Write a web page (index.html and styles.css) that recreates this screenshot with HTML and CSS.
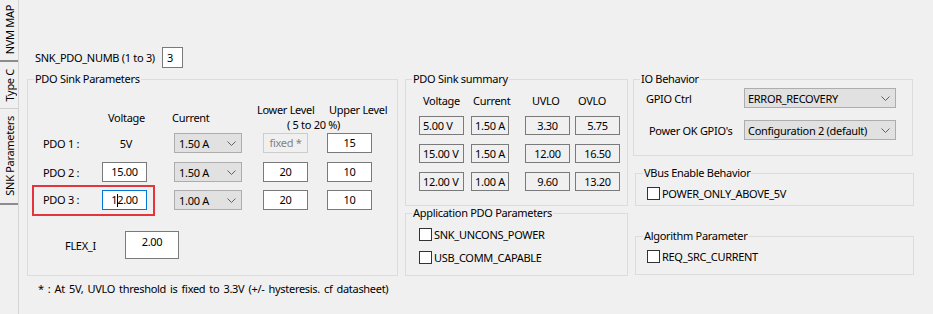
FILE: index.html
```html
<!DOCTYPE html>
<html lang="en">
<head>
    <meta charset="UTF-8">
    <meta name="viewport" content="width=device-width, initial-scale=1.0">
    <title>SNK Parameters</title>
    <link rel="stylesheet" href="styles.css">
</head>
<body>
    <div class="window">
        <!-- vertical tab strip -->
        <nav class="tabs">
            <div class="tab tab-nvm"><span>NVM MAP</span></div>
            <div class="tab tab-typec"><span>Type C</span></div>
            <div class="tab tab-snk active"><span>SNK Parameters</span></div>
        </nav>

        <main class="page">
            <div class="numb-row">
                <span class="numb-label">SNK_PDO_NUMB (1 to 3)</span>
                <span class="field field-numb">3</span>
            </div>

            <div class="columns">
                <!-- PDO Sink Parameters -->
                <fieldset class="group group-sink">
                    <legend>PDO Sink Parameters</legend>
                    <div class="group-body">
                        <div class="sink-head">
                            <span class="h-volt">Voltage</span>
                            <span class="h-cur">Current</span>
                            <div class="h-levels">
                                <div class="h-levels-top">
                                    <span class="h-low">Lower Level</span>
                                    <span>Upper Level</span>
                                </div>
                                <div class="h-range">( 5 to 20 %)</div>
                            </div>
                        </div>

                        <div class="sink-row row-1">
                            <div class="lead">
                                <span class="lead-label">PDO 1 :</span>
                                <span class="volt-text">5V</span>
                            </div>
                            <div class="combo combo-cur">
                                <span>1.50 A</span>
                                <svg class="chev" width="9" height="5" viewBox="0 0 9 5"><polyline points="0.5,0.5 4.5,4.5 8.5,0.5" fill="none" stroke="#606060" stroke-width="1"/></svg>
                            </div>
                            <span class="field field-level level-low disabled">fixed *</span>
                            <span class="field field-level level-up">15</span>
                        </div>

                        <div class="sink-row row-2">
                            <div class="lead">
                                <span class="lead-label">PDO 2 :</span>
                                <span class="field field-volt">15.00</span>
                            </div>
                            <div class="combo combo-cur">
                                <span>1.50 A</span>
                                <svg class="chev" width="9" height="5" viewBox="0 0 9 5"><polyline points="0.5,0.5 4.5,4.5 8.5,0.5" fill="none" stroke="#606060" stroke-width="1"/></svg>
                            </div>
                            <span class="field field-level level-low">20</span>
                            <span class="field field-level level-up">10</span>
                        </div>

                        <div class="sink-row row-3">
                            <div class="lead marked">
                                <span class="lead-label">PDO 3 :</span>
                                <span class="field field-volt focused">1<span class="caret"></span>2.00</span>
                            </div>
                            <div class="combo combo-cur">
                                <span>1.00 A</span>
                                <svg class="chev" width="9" height="5" viewBox="0 0 9 5"><polyline points="0.5,0.5 4.5,4.5 8.5,0.5" fill="none" stroke="#606060" stroke-width="1"/></svg>
                            </div>
                            <span class="field field-level level-low">20</span>
                            <span class="field field-level level-up">10</span>
                        </div>

                        <div class="flex-row">
                            <span class="flex-label">FLEX_I</span>
                            <span class="field field-flex">2.00</span>
                        </div>
                    </div>
                </fieldset>

                <div class="col col-mid">
                    <fieldset class="group group-summary">
                        <legend>PDO Sink summary</legend>
                        <div class="group-body">
                            <div class="sum-row sum-head">
                                <span class="c-volt">Voltage</span>
                                <span class="c-cur">Current</span>
                                <span class="c-uvlo">UVLO</span>
                                <span class="c-ovlo">OVLO</span>
                            </div>
                            <div class="sum-row">
                                <span class="cell c-volt">5.00 V</span>
                                <span class="cell c-cur">1.50 A</span>
                                <span class="cell c-uvlo">3.30</span>
                                <span class="cell c-ovlo">5.75</span>
                            </div>
                            <div class="sum-row">
                                <span class="cell c-volt">15.00 V</span>
                                <span class="cell c-cur">1.50 A</span>
                                <span class="cell c-uvlo">12.00</span>
                                <span class="cell c-ovlo">16.50</span>
                            </div>
                            <div class="sum-row">
                                <span class="cell c-volt">12.00 V</span>
                                <span class="cell c-cur">1.00 A</span>
                                <span class="cell c-uvlo">9.60</span>
                                <span class="cell c-ovlo">13.20</span>
                            </div>
                        </div>
                    </fieldset>

                    <fieldset class="group group-app">
                        <legend>Application PDO Parameters</legend>
                        <div class="group-body">
                            <label class="check check-first"><span class="box"></span>SNK_UNCONS_POWER</label>
                            <label class="check check-second"><span class="box"></span>USB_COMM_CAPABLE</label>
                        </div>
                    </fieldset>
                </div>

                <div class="col col-right">
                    <fieldset class="group group-io">
                        <legend>IO Behavior</legend>
                        <div class="io-row io-row-1">
                            <span class="io-label">GPIO Ctrl</span>
                            <div class="combo combo-io">
                                <span>ERROR_RECOVERY</span>
                                <svg class="chev" width="9" height="5" viewBox="0 0 9 5"><polyline points="0.5,0.5 4.5,4.5 8.5,0.5" fill="none" stroke="#606060" stroke-width="1"/></svg>
                            </div>
                        </div>
                        <div class="io-row io-row-2">
                            <span class="io-label io-label-pok">Power OK GPIO's</span>
                            <div class="combo combo-io">
                                <span>Configuration 2 (default)</span>
                                <svg class="chev" width="9" height="5" viewBox="0 0 9 5"><polyline points="0.5,0.5 4.5,4.5 8.5,0.5" fill="none" stroke="#606060" stroke-width="1"/></svg>
                            </div>
                        </div>
                    </fieldset>

                    <fieldset class="group group-vbus">
                        <legend>VBus Enable Behavior</legend>
                        <div class="group-body">
                            <label class="check"><span class="box"></span>POWER_ONLY_ABOVE_5V</label>
                        </div>
                    </fieldset>

                    <fieldset class="group group-algo">
                        <legend>Algorithm Parameter</legend>
                        <div class="group-body">
                            <label class="check"><span class="box"></span>REQ_SRC_CURRENT</label>
                        </div>
                    </fieldset>
                </div>
            </div>

            <p class="footnote">* : At 5V, UVLO threshold is fixed to 3.3V (+/- hysteresis. cf datasheet)</p>
        </main>
    </div>
</body>
</html>
```

FILE: styles.css
```css
* {
    box-sizing: border-box;
}

body {
    margin: 0;
    background-color: #f0f0f0;
    font-family: "Noto Sans", "Open Sans", sans-serif;
    font-size: 11px;
    letter-spacing: -0.3px;
    line-height: 15px;
    color: #000;
}

.window {
    display: flex;
    width: 933px;
    height: 314px;
}

/* tab strip */
.tabs {
    width: 19px;
    border-right: 1px solid #d4d4d4;
    display: flex;
    flex-direction: column;
}

.tab {
    display: flex;
    align-items: center;
    justify-content: center;
    width: 18px;
}

.tab span {
    writing-mode: vertical-rl;
    transform: rotate(180deg);
    white-space: nowrap;
}

.tab-nvm {
    height: 62px;
    border-bottom: 2px solid #8c8c8c;
}

.tab-typec {
    height: 47px;
    border-bottom: 1px solid #cfcfcf;
}

.tab-snk {
    height: 96px;
    border-bottom: 2px solid #8c8c8c;
}

/* page */
.page {
    flex: 1;
    padding-left: 8px;
}

.numb-row {
    display: flex;
    align-items: center;
    margin-top: 47px;
    margin-left: 8px;
    height: 21px;
}

.numb-label {
    width: 127px;
}

.field {
    display: block;
    background-color: #fff;
    border: 1px solid #7a7a7a;
    text-align: center;
    line-height: 18px;
    height: 20px;
    white-space: nowrap;
}

.field-numb {
    width: 21px;
    height: 21px;
    line-height: 19px;
    text-align: left;
    padding-left: 4px;
}

.columns {
    display: flex;
    align-items: flex-start;
    margin-top: 4px;
}

/* group boxes */
.group {
    margin: 0;
    padding: 0;
    border: 1px solid #dcdcdc;
    min-width: 0;
}

.group legend {
    padding: 0 1px;
    margin-left: 6px;
    line-height: 14px;
}

.group-sink {
    width: 371px;
    padding-bottom: 16px;
}

.group-sink .group-body {
    padding-left: 4px;
}

.sink-head {
    display: flex;
    align-items: flex-end;
    height: 30px;
    margin-top: 16px;
}

.h-volt {
    width: 140px;
    padding-left: 76px;
    margin-bottom: 7px;
}

.h-cur {
    width: 85px;
    margin-bottom: 7px;
}

.h-levels-top {
    display: flex;
}

.h-low {
    width: 72px;
}

.h-range {
    padding-left: 30px;
}

.sink-row {
    display: flex;
    align-items: center;
    height: 20px;
}

.row-1 {
    margin-top: 1px;
}

.row-2 {
    margin-top: 9px;
}

.row-3 {
    margin-top: 8px;
}

.lead {
    width: 123px;
    display: flex;
    align-items: center;
    padding-left: 11px;
}

.lead.marked {
    border: 2px solid #e5353c;
    padding: 3px 0 4px 9px;
}

.lead-label {
    width: 59px;
}

.volt-text {
    width: 45px;
    text-align: center;
    padding-left: 3px;
}

.field-volt {
    width: 45px;
}

.field.focused {
    border-color: #0078d7;
}

.caret {
    display: inline-block;
    width: 1px;
    height: 13px;
    background-color: #000;
    vertical-align: -3px;
    margin-right: -1px;
}

.combo {
    display: flex;
    align-items: center;
    justify-content: space-between;
    height: 20px;
    background-color: #e1e1e1;
    border: 1px solid #adadad;
    padding: 0 5px 0 4px;
    white-space: nowrap;
}

.combo-cur {
    width: 68px;
    margin-left: 19px;
}

.chev {
    display: block;
}

.field-level {
    width: 45px;
}

.level-low {
    margin-left: 21px;
}

.level-up {
    margin-left: 19px;
}

.field.disabled {
    background-color: #f0f0f0;
    border-color: #cccccc;
    color: #838383;
}

.flex-row {
    display: flex;
    align-items: center;
    height: 28px;
    margin-top: 21px;
}

.flex-label {
    width: 93px;
    padding-left: 33px;
}

.field-flex {
    width: 54px;
    height: 28px;
    line-height: 15px;
    padding-top: 2px;
}

/* middle column */
.col-mid {
    margin-left: 7px;
}

.group-summary {
    width: 223px;
    padding-bottom: 14px;
}

.group-summary .group-body,
.group-app .group-body {
    padding-left: 13px;
}

.sum-row {
    display: flex;
    height: 19px;
    margin-top: 9px;
}

.sum-row.sum-head {
    height: 15px;
    margin-top: 7px;
    margin-bottom: -1px;
}

.sum-head span {
    white-space: nowrap;
}

.c-volt {
    width: 45px;
}

.c-cur {
    width: 38px;
    margin-left: 7px;
}

.c-uvlo {
    width: 45px;
    margin-left: 16px;
}

.c-ovlo {
    width: 45px;
    margin-left: 5px;
}

.sum-head .c-volt {
    padding-left: 4px;
}

.sum-head .c-cur {
    padding-left: 2px;
}

.sum-head .c-uvlo {
    padding-left: 7px;
}

.sum-head .c-ovlo {
    padding-left: 3px;
}

.cell {
    border: 1px solid #7a7a7a;
    line-height: 17px;
    text-align: center;
    white-space: nowrap;
}

.cell.c-volt {
    text-align: left;
    padding-left: 3px;
}

.group-app {
    width: 223px;
    padding-bottom: 10px;
}

.check {
    display: flex;
    align-items: center;
    height: 15px;
    margin-top: 6px;
}

.check-first {
    margin-top: 7px;
}

.check-second {
    margin-top: 8px;
}

.box {
    width: 13px;
    height: 13px;
    border: 1px solid #333;
    background-color: #fff;
    margin-right: 2px;
}

/* right column */
.col-right {
    margin-left: 5px;
}

.group-io {
    width: 280px;
    padding-bottom: 15px;
}

.io-row {
    display: flex;
    align-items: center;
    height: 20px;
}

.io-row-1 {
    margin-top: 2px;
}

.io-row-2 {
    margin-top: 12px;
}

.io-label {
    width: 110px;
    padding-left: 12px;
}

.io-label-pok {
    padding-left: 15px;
}

.combo-io {
    width: 152px;
    padding-left: 3px;
}

.group-vbus {
    width: 279px;
    margin-left: 2px;
    margin-top: 10px;
    padding-bottom: 4px;
}

.group-vbus legend,
.group-algo legend {
    margin-left: 7px;
}

.group-vbus .group-body,
.group-algo .group-body {
    padding-left: 11px;
}

.group-algo {
    width: 279px;
    margin-left: 2px;
    margin-top: 23px;
    padding-bottom: 10px;
}

.footnote {
    margin: 5px 0 0 11px;
    word-spacing: 1.5px;
}
```
